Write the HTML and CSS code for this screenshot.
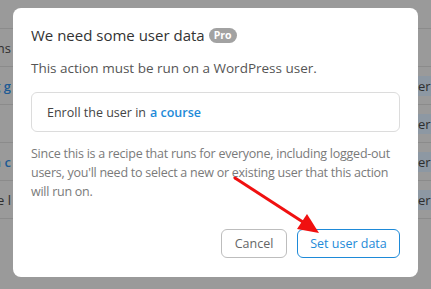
FILE: index.html
```html
<!DOCTYPE html>
<html lang="en">
<head>
    <meta charset="UTF-8">
    <meta name="viewport" content="width=device-width, initial-scale=1.0">
    <title>We need some user data</title>
    <link rel="stylesheet" href="styles.css">
</head>
<body>
    <div class="page">
        <div class="row row-head"></div>
        <div class="row"><span class="cell-left">Actions</span><span class="cell-right"></span></div>
        <div class="row"><span class="cell-left link">Enroll user in a course using g</span><span class="cell-right mark">er o</span></div>
        <div class="row"><span class="cell-left"></span><span class="cell-right mark">er o</span></div>
        <div class="row"><span class="cell-left link">Send a c</span><span class="cell-right mark">er o</span></div>
        <div class="row"><span class="cell-left">Complete l</span><span class="cell-right mark">er o</span></div>
        <div class="row row-last"></div>
    </div>

    <div class="modal">
        <h1 class="modal-title">We need some user data <span class="badge">Pro</span></h1>
        <p class="modal-sub">This action must be run on a WordPress user.</p>

        <div class="action-box">
            Enroll the user in <a href="#" class="action-link">a course</a>
        </div>

        <p class="modal-note">Since this is a recipe that runs for everyone, including logged&#8209;out users, you'll need to select a new or existing user that this action will run on.</p>

        <div class="modal-actions">
            <button class="btn btn-cancel">Cancel</button>
            <button class="btn btn-primary">Set user data</button>
        </div>
    </div>

    <svg class="arrow" width="431" height="289" viewBox="0 0 431 289">
        <line x1="235" y1="178" x2="306" y2="224" stroke="#f01010" stroke-width="3" stroke-linecap="round"/>
        <polygon points="319,233 297,229 307,214" fill="#f01010"/>
    </svg>
</body>
</html>
```

FILE: styles.css
```css
* {
    box-sizing: border-box;
}

body {
    margin: 0;
    background-color: #9a9a9a;
    font-family: "Open Sans", "Noto Sans", sans-serif;
    overflow: hidden;
}

.page {
    display: flex;
    flex-direction: column;
    height: 289px;
}

.row {
    display: flex;
    justify-content: space-between;
    align-items: center;
    height: 38px;
    border-bottom: 1px solid #8b8b8b;
    font-size: 13px;
    color: #2e2e2e;
}

.row-head {
    height: 29px;
}

.row-last {
    border-bottom: none;
}

.cell-left {
    width: 11px;
    overflow: hidden;
    white-space: nowrap;
    direction: rtl;
    text-align: left;
}

.cell-left.link {
    color: #1d5a94;
    font-weight: 600;
}

.cell-right {
    width: 13px;
    overflow: hidden;
    white-space: nowrap;
}

.cell-right.mark {
    background-color: #8d98a3;
    padding: 1px 0;
}

.modal {
    position: absolute;
    left: 13px;
    top: 8px;
    width: 405px;
    height: 269px;
    background: white;
    border-radius: 8px;
    padding: 16px 18px 19px;
    display: flex;
    flex-direction: column;
}

.modal-title {
    margin: 0;
    font-size: 15px;
    line-height: 22px;
    font-weight: 400;
    color: #333;
    display: flex;
    align-items: center;
    gap: 4px;
}

.badge {
    display: inline-block;
    background-color: #a2a2a2;
    color: white;
    font-size: 10.5px;
    font-weight: 700;
    line-height: 15px;
    padding: 0 5px;
    border-radius: 8px;
}

.modal-sub {
    margin: 12px 0 0;
    font-size: 13.5px;
    line-height: 20px;
    color: #555;
}

.action-box {
    margin-top: 14px;
    height: 40px;
    border: 1px solid #dcdcdc;
    border-radius: 6px;
    padding: 0 15px;
    display: flex;
    align-items: center;
    gap: 4px;
    font-size: 12.5px;
    color: #444;
}

.action-link {
    color: #1e8ad8;
    font-weight: 600;
    text-decoration: none;
}

.modal-note {
    margin: 12px 0 0;
    font-size: 12.5px;
    line-height: 19px;
    letter-spacing: -0.25px;
    color: #7a7a7a;
}

.modal-actions {
    margin-top: auto;
    display: flex;
    justify-content: flex-end;
    gap: 10px;
}

.btn {
    height: 29px;
    padding: 0;
    border-radius: 6px;
    background: white;
    font-family: inherit;
    font-size: 12.5px;
    white-space: nowrap;
    cursor: pointer;
}

.btn-cancel {
    border: 1px solid #bdbdbd;
    color: #666;
    width: 66px;
}

.btn-primary {
    border: 1px solid #1e8ad8;
    color: #1e8ad8;
    width: 103px;
}

.arrow {
    position: absolute;
    left: 0;
    top: 0;
    pointer-events: none;
}
```
